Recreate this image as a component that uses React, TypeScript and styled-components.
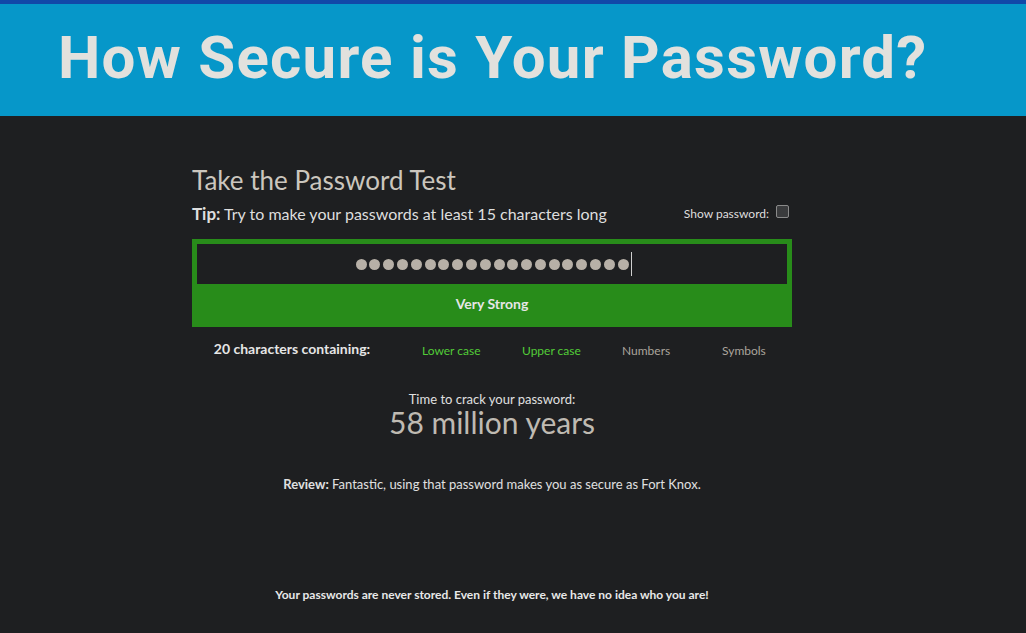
import React from "react";
import styled, { createGlobalStyle } from "styled-components";

const GlobalStyle = createGlobalStyle`
	html, body {
		margin: 0;
		padding: 0;
		background: #1e1f21;
		font-family: Lato, "Open Sans", sans-serif;
		color: #dcdcdc;
	}
`;

const Header = styled.header`
	border-top: 4px solid #1148a8;
	background: #0697c9;
	height: 112px;
	padding-left: 58px;
	display: flex;
	align-items: center;
`;

const HeaderTitle = styled.h1`
	margin: 0 0 6px 0;
	font-family: Roboto, "Open Sans", sans-serif;
	font-weight: 700;
	font-size: 60px;
	letter-spacing: 1.25px;
	color: #e2e1dd;
`;

const Main = styled.main`
	width: 600px;
	margin-left: 192px;
	padding-top: 48px;
`;

const TestTitle = styled.h2`
	margin: 0;
	font-size: 26px;
	font-weight: 400;
	line-height: 32px;
	color: #cbc6be;
`;

const TipRow = styled.div`
	display: flex;
	justify-content: space-between;
	align-items: center;
	margin-top: 5px;
	height: 24px;
`;

const Tip = styled.p`
	margin: 0;
	font-size: 16px;
	color: #dedede;

	b {
		font-weight: 700;
		font-size: 17px;
	}
`;

const ShowLabel = styled.label`
	display: flex;
	align-items: center;
	gap: 7px;
	font-size: 12px;
	color: #dedede;
	margin-right: 3px;
`;

const CheckBox = styled.span`
	width: 11px;
	height: 11px;
	border: 1px solid #8a8a8a;
	border-radius: 2px;
	background: #3a3b3d;
	margin-top: -3px;
`;

const StrengthBox = styled.div`
	margin-top: 14px;
	background: #288c1a;
	padding: 5px;
`;

const PasswordField = styled.div`
	height: 40px;
	background: #1e1f21;
	display: flex;
	align-items: center;
	justify-content: center;
	gap: 2.8px;
	padding-left: 4px;
`;

const Dot = styled.span`
	width: 11px;
	height: 11px;
	border-radius: 50%;
	background: #b7b0a7;
`;

const Caret = styled.span`
	width: 1px;
	height: 24px;
	background: #cfcfcf;
`;

const StrengthLabel = styled.div`
	height: 38px;
	display: flex;
	align-items: center;
	justify-content: center;
	font-size: 14px;
	font-weight: 700;
	color: #e6e6e6;
`;

const CharRow = styled.div`
	display: grid;
	grid-template-columns: 200px repeat(4, 100px);
	margin-top: 14px;
	align-items: center;
`;

const CharCount = styled.div`
	text-align: center;
	font-size: 14px;
	font-weight: 700;
	color: #e6e6e6;
	margin-top: -3px;
`;

const CharType = styled.div<{ $present: boolean }>`
	font-size: 12px;
	color: ${(p) => (p.$present ? "#52cc38" : "#aaa49c")};
	padding: 2px 0 0 30px;
`;

const CrackBlock = styled.div`
	margin-top: 34px;
	text-align: center;
`;

const CrackCaption = styled.div`
	font-size: 13px;
	color: #e0e0e0;
	line-height: 15px;
`;

const CrackTime = styled.div`
	font-size: 30px;
	line-height: 31px;
	color: #bfbab2;
`;

const Review = styled.p`
	margin: 38px 0 0;
	text-align: center;
	font-size: 13px;
	color: #e0e0e0;

	b {
		font-weight: 700;
	}
`;

const Footer = styled.p`
	margin: 95px 0 0;
	text-align: center;
	font-size: 12px;
	font-weight: 700;
	color: #e8e8e8;
`;

const types = [
	{ name: "Lower case", present: true },
	{ name: "Upper case", present: true },
	{ name: "Numbers", present: false },
	{ name: "Symbols", present: false },
];

function App() {
	const dots = Array.from({ length: 20 });

	return (
		<>
			<GlobalStyle />
			<Header>
				<HeaderTitle>How Secure is Your Password?</HeaderTitle>
			</Header>
			<Main>
				<TestTitle>Take the Password Test</TestTitle>
				<TipRow>
					<Tip><b>Tip:</b> Try to make your passwords at least 15 characters long</Tip>
					<ShowLabel>Show password: <CheckBox /></ShowLabel>
				</TipRow>
				<StrengthBox>
					<PasswordField>
						{dots.map((_, i) => <Dot key={i} />)}
						<Caret />
					</PasswordField>
					<StrengthLabel>Very Strong</StrengthLabel>
				</StrengthBox>
				<CharRow>
					<CharCount>20 characters containing:</CharCount>
					{types.map((t) => (
						<CharType key={t.name} $present={t.present}>{t.name}</CharType>
					))}
				</CharRow>
				<CrackBlock>
					<CrackCaption>Time to crack your password:</CrackCaption>
					<CrackTime>58 million years</CrackTime>
				</CrackBlock>
				<Review><b>Review:</b> Fantastic, using that password makes you as secure as Fort Knox.</Review>
				<Footer>Your passwords are never stored. Even if they were, we have no idea who you are!</Footer>
			</Main>
		</>
	);
}

export default App;
